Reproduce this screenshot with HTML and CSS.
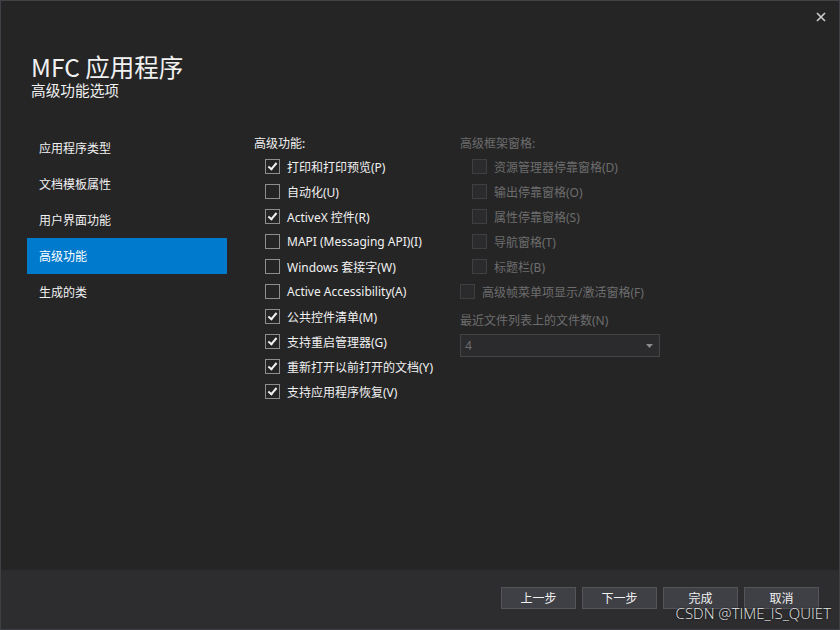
FILE: index.html
```html
<!DOCTYPE html>
<html lang="zh-CN">
<head>
<meta charset="utf-8">
<link rel="stylesheet" href="styles.css">
</head>
<body>
<div class="window">
  <div class="header">
    <div class="titles">
      <div class="title">MFC 应用程序</div>
      <div class="subtitle">高级功能选项</div>
    </div>
    <div class="close">
      <svg width="10" height="10" viewBox="0 0 10 10"><path d="M1 1L9 9M9 1L1 9" stroke="#cfcfcf" stroke-width="1.6" fill="none"/></svg>
    </div>
  </div>
  <div class="main">
    <div class="nav">
      <div class="nav-item">应用程序类型</div>
      <div class="nav-item">文档模板属性</div>
      <div class="nav-item">用户界面功能</div>
      <div class="nav-item active">高级功能</div>
      <div class="nav-item">生成的类</div>
    </div>
    <div class="content">
      <div class="col col-left">
        <div class="label">高级功能:</div>
        <div class="row"><span class="box checked"></span>打印和打印预览(P)</div>
        <div class="row"><span class="box"></span>自动化(U)</div>
        <div class="row"><span class="box checked"></span>ActiveX 控件(R)</div>
        <div class="row"><span class="box"></span>MAPI (Messaging API)(I)</div>
        <div class="row"><span class="box"></span>Windows 套接字(W)</div>
        <div class="row"><span class="box"></span>Active Accessibility(A)</div>
        <div class="row"><span class="box checked"></span>公共控件清单(M)</div>
        <div class="row"><span class="box checked"></span>支持重启管理器(G)</div>
        <div class="row"><span class="box checked"></span>重新打开以前打开的文档(Y)</div>
        <div class="row"><span class="box checked"></span>支持应用程序恢复(V)</div>
      </div>
      <div class="col col-right disabled">
        <div class="label">高级框架窗格:</div>
        <div class="row indent"><span class="box"></span>资源管理器停靠窗格(D)</div>
        <div class="row indent"><span class="box"></span>输出停靠窗格(O)</div>
        <div class="row indent"><span class="box"></span>属性停靠窗格(S)</div>
        <div class="row indent"><span class="box"></span>导航窗格(T)</div>
        <div class="row indent"><span class="box"></span>标题栏(B)</div>
        <div class="row"><span class="box"></span>高级帧菜单项显示/激活窗格(F)</div>
        <div class="label label-mru">最近文件列表上的文件数(N)</div>
        <div class="combo">
          <span>4</span>
          <svg width="7" height="4" viewBox="0 0 7 4"><path d="M0 0H7L3.5 4Z" fill="#8a8a8a"/></svg>
        </div>
      </div>
    </div>
  </div>
  <div class="footer">
    <div class="btn">上一步</div>
    <div class="btn">下一步</div>
    <div class="btn">完成</div>
    <div class="btn">取消</div>
    <div class="watermark">CSDN @TIME_IS_QUIET</div>
  </div>
</div>
</body>
</html>
```
FILE: styles.css
```css
html, body {
  margin: 0;
  padding: 0;
  background: #252526;
}
body {
  font-family: "Noto Sans", "Noto Sans CJK SC", sans-serif;
  color: #f1f1f1;
}
.window {
  width: 840px;
  height: 630px;
  box-sizing: border-box;
  border: 1px solid #3f3f46;
  border-top-color: #434346;
  background: #252526;
  display: flex;
  flex-direction: column;
  position: relative;
}
.header {
  height: 129px;
  display: flex;
  justify-content: space-between;
  align-items: flex-start;
}
.titles {
  padding-left: 30px;
  padding-top: 53px;
}
.title {
  font-family: "Noto Sans CJK SC", sans-serif;
  font-size: 24.5px;
  line-height: 26px;
  height: 26px;
  color: #f1f1f1;
}
.subtitle {
  font-family: "Noto Sans CJK SC", sans-serif;
  font-size: 14.67px;
  line-height: 18px;
  height: 18px;
  margin-top: 1px;
  color: #f1f1f1;
}
.close {
  width: 10px;
  height: 10px;
  margin-top: 11px;
  margin-right: 13px;
}
.close svg { display: block; }
.main {
  flex: 1;
  display: flex;
}
.nav {
  width: 200px;
  margin-left: 26px;
  display: flex;
  flex-direction: column;
}
.nav-item {
  height: 36px;
  line-height: 36px;
  padding-left: 12px;
  font-size: 12px;
  font-family: "Noto Sans CJK SC", sans-serif;
  color: #f1f1f1;
}
.nav-item.active {
  background: #007acc;
  color: #ffffff;
}
.content {
  display: flex;
  margin-left: 27px;
  padding-top: 4px;
}
.col-left { width: 206px; }
.col { display: flex; flex-direction: column; }
.label {
  font-size: 12px;
  line-height: 20px;
  height: 20px;
}
.row {
  height: 25px;
  display: flex;
  align-items: center;
  font-size: 12px;
  white-space: nowrap;
  padding-left: 11px;
}
.box {
  width: 13px;
  height: 13px;
  border: 1px solid #8e8e90;
  margin-right: 7px;
  flex: none;
  position: relative;
  background: #252526;
}
.box.checked::after {
  content: "";
  position: absolute;
  left: 4px;
  top: 1px;
  width: 3px;
  height: 7px;
  border-right: 2px solid #f1f1f1;
  border-bottom: 2px solid #f1f1f1;
  transform: rotate(40deg);
}
.disabled { color: #6d6d6d; }
.disabled .row { padding-left: 0; }
.disabled .row.indent { padding-left: 12px; }
.disabled .box {
  border-color: #3f3f42;
  background: #2b2b2d;
}
.label-mru { margin-top: 7px; }
.combo {
  margin-top: 3px;
  width: 188px;
  height: 21px;
  border: 1px solid #434346;
  background: #2b2b2d;
  display: flex;
  align-items: center;
  justify-content: space-between;
  padding: 0 6px 0 4px;
  font-size: 12px;
  color: #6d6d6d;
}
.combo svg { display: block; }
.footer {
  height: 59px;
  background: #2d2d30;
  border-top: 1px solid #2d2d30;
  display: flex;
  justify-content: flex-end;
  align-items: flex-start;
  gap: 6px;
  padding: 16px 20px 0 0;
  box-sizing: border-box;
  position: relative;
}
.btn {
  width: 73px;
  height: 20px;
  border: 1px solid #555559;
  background: #3f3f46;
  color: #f1f1f1;
  font-family: "Noto Sans CJK SC", sans-serif;
  font-size: 12px;
  line-height: 20px;
  text-align: center;
}
.watermark {
  position: absolute;
  right: 8px;
  bottom: 7px;
  font-family: "Open Sans", sans-serif;
  font-weight: 300;
  font-size: 15px;
  line-height: 18px;
  color: #e8e8e8;
  text-shadow: 0 0 2px #000;
}
```
